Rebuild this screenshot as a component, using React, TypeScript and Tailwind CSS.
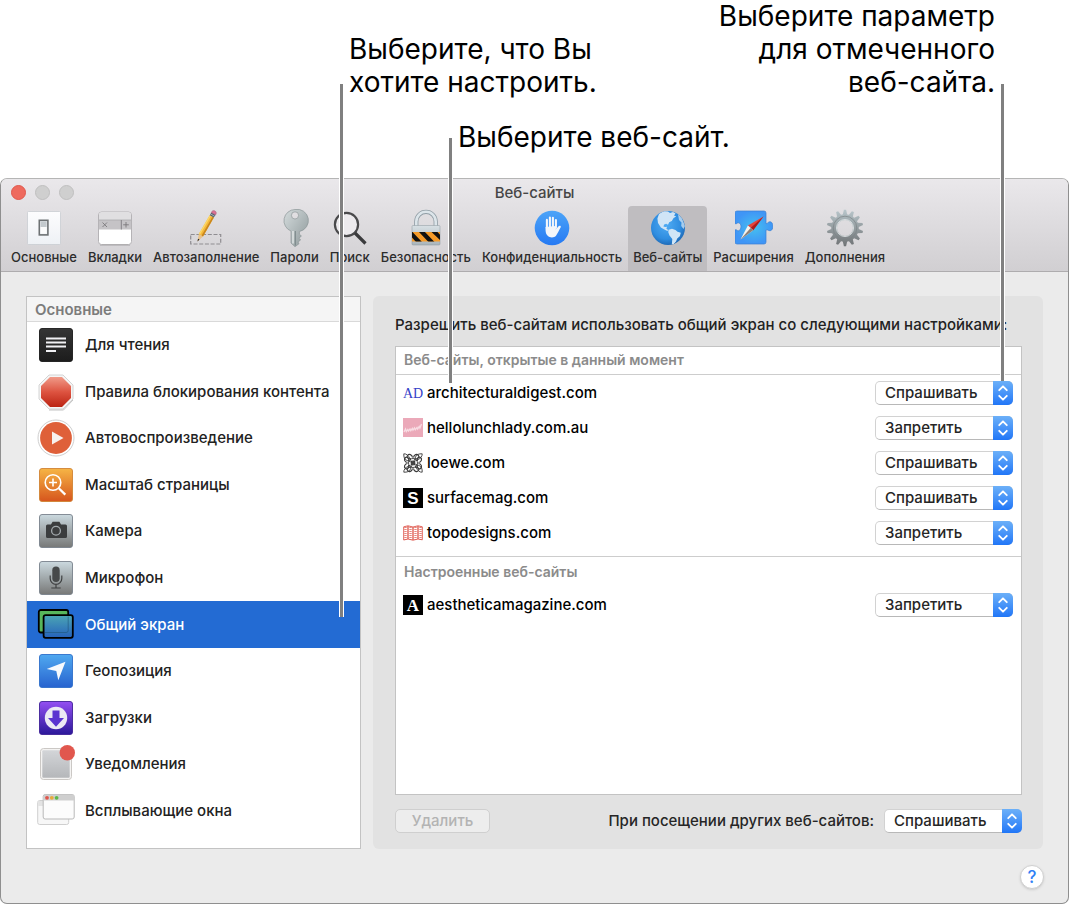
import type { ReactNode } from "react";

const permissions = ["Спрашивать", "Запретить", "Разрешить"];

// Toolbar icons, all drawn on a 38x38 grid
const GeneralIcon = () => (
    <svg viewBox="0 0 38 38" className="size-[38px]" aria-hidden="true">
        <defs>
            <linearGradient id="tbGeneral" x1="0" y1="0" x2="0" y2="1">
                <stop offset="0" stopColor="#fdfdfe" />
                <stop offset="1" stopColor="#eef1f5" />
            </linearGradient>
        </defs>
        <rect x="2.5" y="2.5" width="33" height="33" rx="1" fill="url(#tbGeneral)" stroke="#c9cdd2" strokeWidth="0.8" />
        <rect x="14.3" y="11.3" width="8.6" height="14.6" fill="#eceff1" stroke="#6d7173" strokeWidth="1.6" />
        <rect x="15.6" y="12.4" width="6" height="5.6" fill="#c3c9cd" />
        <rect x="15.6" y="18" width="6" height="6.6" fill="#fbfbfb" />
    </svg>
);

const TabsIcon = () => (
    <svg viewBox="0 0 38 38" className="size-[38px]" aria-hidden="true">
        <rect x="2.5" y="3" width="33" height="32.5" rx="3" fill="#fff" stroke="#b5b3b6" strokeWidth="1" />
        <path d="M3 11V6a3 3 0 0 1 3-3h26a3 3 0 0 1 3 3v5z" fill="#e0dfe1" />
        <rect x="3" y="11" width="32" height="9.5" fill="#c5c3c6" />
        <path d="M3 11h32" stroke="#aaa8ab" strokeWidth="0.8" />
        <path d="M25.3 11v9.5" stroke="#858387" strokeWidth="1" />
        <path d="M6.5 13.5l4.5 4.5M11 13.5l-4.5 4.5M30 13v5.5M27.2 15.8h5.6" stroke="#7a787c" strokeWidth="0.9" />
        <path d="M4 36.2h30" stroke="#a3a1a5" strokeWidth="0.7" />
    </svg>
);

const AutofillIcon = () => (
    <svg viewBox="0 0 38 38" className="size-[38px]" aria-hidden="true">
        <rect x="3.7" y="25.5" width="30" height="9.5" fill="none" stroke="#8f8d91" strokeWidth="1.2" strokeDasharray="4 1.7" />
        <path d="M10.5 32.5l1.3-7.5 4.2 2.4z" fill="#e8c28c" />
        <path d="M10.5 32.5l.5-2.8 1.5.9z" fill="#222" />
        <path d="M11.8 25L22.7 6.2l4.2 2.4L16 27.4z" fill="#f5b83a" />
        <path d="M14.6 26.6L25.5 7.8l1.4.8L16 27.4z" fill="#c9861e" />
        <path d="M11.8 25L22.7 6.2l1.2.7L13 25.7z" fill="#fbd768" />
        <path d="M22.7 6.2l1.7-2.8 4.2 2.4-1.7 2.8z" fill="#56636e" />
        <path d="M23.5 4.9l4.2 2.4" stroke="#a9b6be" strokeWidth="0.9" />
        <path d="M24.4 3.4C25.5 0 31 2 28.6 5.8z" fill="#dc7294" stroke="#a8587a" strokeWidth="0.6" />
    </svg>
);

const KeyIcon = () => (
    <svg viewBox="0 0 38 38" className="size-[38px]" aria-hidden="true">
        <defs>
            <linearGradient id="tbKey" x1="0" y1="0" x2="1" y2="1">
                <stop offset="0" stopColor="#d5dcdd" />
                <stop offset="1" stopColor="#8c9799" />
            </linearGradient>
        </defs>
        <path
            d="M19 .5a11.2 11.2 0 0 0-4 21.6V34l4 3.7 4-3-1-1.7 2.6-2-1.6-1.8 2.4-2.2-2-1.8V22.5A11.2 11.2 0 0 0 19 .5zm0 2.3a3.6 3.6 0 1 1 0 7.2 3.6 3.6 0 0 1 0-7.2z"
            fill="url(#tbKey)"
            fillRule="evenodd"
            stroke="#8c9698"
            strokeWidth="0.7"
        />
        <path d="M19.3 22v14.5" stroke="#798587" strokeWidth="1" />
        <path d="M17 22v12.5" stroke="#eef2f2" strokeWidth="1.2" />
    </svg>
);

const SearchIcon = () => (
    <svg viewBox="0 0 38 38" className="size-[38px]" aria-hidden="true">
        <circle cx="15.5" cy="15.5" r="11.6" fill="#eceaed" stroke="#4a4a4c" strokeWidth="2.2" />
        <path d="M24 24l10.5 10.5" stroke="#3b3b3d" strokeWidth="3.2" />
    </svg>
);

const LockIcon = () => (
    <svg viewBox="0 0 38 38" className="size-[38px]" aria-hidden="true">
        <defs>
            <linearGradient id="tbLock" x1="0" y1="0" x2="0" y2="1">
                <stop offset="0" stopColor="#d8e0e4" />
                <stop offset="1" stopColor="#a9b4bb" />
            </linearGradient>
            <clipPath id="tbLockStripes">
                <rect x="5" y="23" width="28" height="9.5" />
            </clipPath>
        </defs>
        <path d="M9.3 18v-5.5a9.7 9.7 0 0 1 19.4 0V18" fill="none" stroke="#8f9ca4" strokeWidth="4.2" />
        <path d="M9.3 18v-5.5a9.7 9.7 0 0 1 19.4 0V18" fill="none" stroke="#dce5ea" strokeWidth="2.6" />
        <rect x="5" y="16.5" width="28" height="19.5" rx="1" fill="url(#tbLock)" stroke="#8b969d" strokeWidth="0.5" />
        <rect x="5" y="23" width="28" height="9.5" fill="#f59a28" />
        <path d="M5 22.5l10 10.5H9l-4-4.5zM11.5 22.5h6L27.5 33h-6zM24 22.5h6l5 5.5v5z" fill="#111" clipPath="url(#tbLockStripes)" />
    </svg>
);

const PrivacyIcon = () => (
    <svg viewBox="0 0 38 38" className="size-[38px]" aria-hidden="true">
        <defs>
            <linearGradient id="tbPrivacy" x1="0" y1="0" x2="0" y2="1">
                <stop offset="0" stopColor="#4ca4f8" />
                <stop offset="1" stopColor="#2579f3" />
            </linearGradient>
        </defs>
        <circle cx="19" cy="19" r="17.3" fill="url(#tbPrivacy)" />
        <path d="M12.5 18c0 5 .3 6.8 2.2 8.8 2 2.2 6.6 2.1 8.3 0 1.3-1.6 3.2-5.8 4.6-8.2 1-1.7-1.2-2.4-2.3-1.1l-2.5 3V17z" fill="#f3f6fa" />
        <path d="M13.9 19v-8.1M16.9 18V8.5M19.9 18V8.8M22.9 19v-8" stroke="#f3f6fa" strokeWidth="2.1" strokeLinecap="round" />
    </svg>
);

const GlobeIcon = () => (
    <svg viewBox="0 0 38 38" className="size-[38px]" aria-hidden="true">
        <defs>
            <radialGradient id="tbGlobe" cx="0.45" cy="0.4" r="0.65">
                <stop offset="0" stopColor="#4fabf3" />
                <stop offset="0.65" stopColor="#2f8de0" />
                <stop offset="1" stopColor="#1b62ad" />
            </radialGradient>
            <clipPath id="tbGlobeClip">
                <circle cx="19" cy="19" r="17" />
            </clipPath>
        </defs>
        <circle cx="19" cy="19" r="17" fill="url(#tbGlobe)" />
        <g clipPath="url(#tbGlobeClip)" fill="#d0e5f6">
            <path d="M10 5l5-3 4 .5 2 1.5 3-1 2.5 1.5-1.5 2 2.2 1-2.6 1.6-1.8 2.9-2.6 1.3-1.2 2.5-1.8-1-2 .6-.8 2.2 1.8.5 1.8-.3-.6 2 1.8 1.3-.8.9-3-1.6-3.5-2L9 14 8.4 9.5z" />
            <path d="M19.5 20.7l3.5-1 3.5 1.2 2 1.8 3.3 1-1 3.6-2.6 2.3-1.2 3-2.9 3.2-1.3-.5.5-5.2-2.8-3.7-1.2-3.2z" />
            <path d="M29 5l4 4.5 3 7.5-1.5 3-2.3-3 .3-3.500-2.500-2.500z" opacity="0.75" />
        </g>
    </svg>
);

const ExtensionsIcon = () => (
    <svg viewBox="0 0 38 38" className="size-[38px]" aria-hidden="true">
        <defs>
            <radialGradient id="tbExt">
                <stop offset="0" stopColor="#45c0ef" />
                <stop offset="1" stopColor="#3f95f6" />
            </radialGradient>
        </defs>
        <path
            d="M2 2h27a2 2 0 0 1 2 2v10.5c1.5.8 2-2 4.2-1.8 3.6.5 3.6 8.6 0 9-2.2.1-2.7-1.6-4.2-.7V33a2 2 0 0 1-2 2H2a2 2 0 0 1-2-2V21c1.5-1.2 2 1 3.5.8 3.3-.8 3.3-7.6 0-8-1.5-.2-2 1.8-3.5.7V4a2 2 0 0 1 2-2z"
            fill="url(#tbExt)"
            stroke="#3980d2"
            strokeWidth="0.7"
        />
        <path d="M28.5 7.5l-15.6 9 5.3 4.7z" fill="#e5443c" />
        <path d="M28.5 7.5L15.6 18.9l2.6 2.3z" fill="#a91d1d" />
        <path d="M5.5 30.5l7.4-14 5.3 4.7z" fill="#f6f3ee" />
        <path d="M5.5 30.5l10.1-11.6 2.6 2.3z" fill="#8d8178" />
    </svg>
);

const teeth = Array.from({ length: 14 }, (_, i) => (i * 360) / 14);

const GearIcon = () => (
    <svg viewBox="0 0 38 38" className="size-[38px]" aria-hidden="true">
        <defs>
            <linearGradient id="tbGear" gradientUnits="userSpaceOnUse" x1="0" y1="0" x2="0" y2="38">
                <stop offset="0" stopColor="#bac8cd" />
                <stop offset="1" stopColor="#6e7173" />
            </linearGradient>
            <mask id="tbGearMask">
                <rect width="38" height="38" fill="#000" />
                <circle cx="19" cy="19" r="13.8" fill="#fff" />
                {teeth.map((angle) => (
                    <path key={angle} d="M16.7 6L17.9.8h2.2L21.3 6z" fill="#fff" transform={`rotate(${angle} 19 19)`} />
                ))}
                <circle cx="19" cy="19" r="8" fill="#000" />
            </mask>
        </defs>
        <rect width="38" height="38" fill="url(#tbGear)" mask="url(#tbGearMask)" />
        <circle cx="19" cy="19" r="11.8" fill="none" stroke="#7b8285" strokeWidth="0.7" />
        <circle cx="19" cy="19" r="8.5" fill="none" stroke="#dfe5e7" strokeWidth="0.9" />
    </svg>
);

// Sidebar icons, drawn on a 38x38 grid with a 34px tile inside
const Tile = ({ id, from, to, edge, children }: { id: string; from: string; to: string; edge: string; children: ReactNode }) => (
    <svg viewBox="0 0 38 38" className="size-[38px]" aria-hidden="true">
        <defs>
            <linearGradient id={id} x1="0" y1="0" x2="0" y2="1">
                <stop offset="0" stopColor={from} />
                <stop offset="1" stopColor={to} />
            </linearGradient>
        </defs>
        <rect x="2.5" y="2.5" width="33" height="33" rx="2.5" fill={`url(#${id})`} stroke={edge} strokeWidth="0.9" />
        {children}
    </svg>
);

const ReaderIcon = () => (
    <Tile id="sbReader" from="#353535" to="#1c1c1c" edge="#1a1a1a">
        <path d="M9 12.5h20M9 16.5h20M9 20.5h20M9 25h10" stroke="#f1f1f4" strokeWidth="1.8" />
    </Tile>
);

const BlockerIcon = () => (
    <svg viewBox="0 0 38 38" className="size-[38px]" aria-hidden="true">
        <defs>
            <linearGradient id="sbStop" x1="0" y1="0" x2="0" y2="1">
                <stop offset="0" stopColor="#f09a88" />
                <stop offset="0.5" stopColor="#dd5340" />
                <stop offset="1" stopColor="#bb2413" />
            </linearGradient>
        </defs>
        <path d="M12 2h14l10 10v14L26 36H12L2 26V12z" fill="#f5f5f5" stroke="#d4d4d4" strokeWidth="1" />
        <path d="M12 37h14.5L36 27" fill="none" stroke="#b5b5b5" strokeWidth="0.8" />
        <path d="M13 4h12l9 9v12l-9 9H13l-9-9V13z" fill="url(#sbStop)" />
    </svg>
);

const AutoplayIcon = () => (
    <svg viewBox="0 0 38 38" className="size-[38px]" aria-hidden="true">
        <circle cx="19" cy="19" r="18" fill="#fff" stroke="#cfcfcf" strokeWidth="1" />
        <circle cx="19" cy="19" r="15.9" fill="#df6039" />
        <path d="M15 12.5L26.5 19 15 25.5z" fill="#f7f1ee" />
    </svg>
);

const ZoomIcon = () => (
    <Tile id="sbZoom" from="#f6b545" to="#d6551d" edge="#d08334">
        <circle cx="16" cy="16.5" r="7.8" fill="none" stroke="#fff" strokeWidth="1.6" />
        <path d="M16 12.5v8M12 16.5h8" stroke="#fff" strokeWidth="1.6" />
        <path d="M21.8 22.3l6.5 6.3" stroke="#fff" strokeWidth="2.2" />
    </Tile>
);

const CameraIcon = () => (
    <Tile id="sbCamera" from="#cbd9df" to="#777877" edge="#78818b">
        <path d="M10.5 12.5H14l1.6-2.8h6.8l1.6 2.8h4.5A1.5 1.5 0 0 1 30 14v10.5a1.5 1.5 0 0 1-1.5 1.5h-18A1.5 1.5 0 0 1 9 24.5V14a1.5 1.5 0 0 1 1.5-1.5z" fill="#3b3d3e" />
        <circle cx="19" cy="18.8" r="4.4" fill="#3b3d3e" stroke="#a4abae" strokeWidth="1.3" />
    </Tile>
);

const MicIcon = () => (
    <Tile id="sbMic" from="#cbd9df" to="#777877" edge="#78818b">
        <rect x="15.3" y="7.5" width="7.4" height="15.5" rx="3.7" fill="#46494a" />
        <path d="M13.2 16.5v3a5.8 5.8 0 0 0 11.6 0v-3M19 25.3V29M14.3 29h9.4" fill="none" stroke="#3f4142" strokeWidth="1.2" />
    </Tile>
);

const ScreenIcon = () => (
    <svg viewBox="0 0 38 38" className="size-[38px]" aria-hidden="true">
        <defs>
            <linearGradient id="sbScreen" x1="0" y1="0" x2="0" y2="1">
                <stop offset="0" stopColor="#4ba5b4" />
                <stop offset="1" stopColor="#2662bc" />
            </linearGradient>
        </defs>
        <rect x="1.8" y="4" width="29.4" height="22.5" rx="2" fill="#58b65b" stroke="#000" strokeWidth="1.8" />
        <rect x="6.6" y="9.2" width="29.2" height="22.6" rx="2" fill="url(#sbScreen)" stroke="#000" strokeWidth="1.8" />
        <path d="M31.2 10.5v14a2 2 0 0 1-2 2H8" fill="none" stroke="#1f557a" strokeWidth="1" opacity="0.6" />
    </svg>
);

const LocationIcon = () => (
    <Tile id="sbLocation" from="#50a9f0" to="#2763cf" edge="#2f6fc9">
        <path d="M28.5 9.7l-7.2 18.5-2-9.2-9.6-2z" fill="#f7fafd" />
    </Tile>
);

const DownloadsIcon = () => (
    <Tile id="sbDownloads" from="#944ff3" to="#2b1899" edge="#402197">
        <circle cx="19" cy="19" r="11.2" fill="#ece9f4" />
        <path d="M15.5 11.5h7V19H27l-8 8.8-8-8.8h4.5z" fill="#5b34d0" />
    </Tile>
);

const NotificationsIcon = () => (
    <svg viewBox="0 0 38 38" className="size-[38px]" aria-hidden="true">
        <defs>
            <linearGradient id="sbNotify" x1="0" y1="0" x2="0" y2="1">
                <stop offset="0" stopColor="#d3d5d8" />
                <stop offset="1" stopColor="#b5b7ba" />
            </linearGradient>
        </defs>
        <rect x="3.5" y="3.5" width="31" height="31" rx="3" fill="#f4f3f2" stroke="#cbc8c5" strokeWidth="1" />
        <rect x="5.3" y="5.3" width="27.4" height="27.4" rx="1" fill="url(#sbNotify)" />
        <circle cx="30.3" cy="7.8" r="7.7" fill="#e1574e" />
    </svg>
);

const PopupsIcon = () => (
    <svg viewBox="0 0 38 38" className="size-[38px]" aria-hidden="true">
        <rect x="0.7" y="8.5" width="31" height="24" rx="2" fill="#f7f7f7" stroke="#cfcfcf" strokeWidth="1" />
        <rect x="1.2" y="9" width="30" height="5" fill="#e3e3e3" />
        <rect x="6.2" y="2.5" width="31" height="24.5" rx="2" fill="#fcfcfc" stroke="#b9b9b9" strokeWidth="1" />
        <path d="M6.2 8.5v-4a2 2 0 0 1 2-2h27a2 2 0 0 1 2 2v4z" fill="#cfcfcf" />
        <circle cx="10" cy="5.8" r="1.9" fill="#e0564c" />
        <circle cx="14.8" cy="5.8" r="1.9" fill="#e9ab3c" />
        <circle cx="19.6" cy="5.8" r="1.9" fill="#5cb84b" />
    </svg>
);

// Favicons
const AdFavicon = () => (
    <svg viewBox="0 0 20 20" className="size-5" aria-hidden="true">
        <text x="10" y="15" textAnchor="middle" fontSize="14" fill="#3541c8" fontFamily="Liberation Serif, serif">AD</text>
    </svg>
);

const LunchLadyFavicon = () => (
    <svg viewBox="0 0 20 20" className="size-5" aria-hidden="true">
        <rect width="20" height="19" fill="#eba9b9" />
        <path d="M1 14l1.5-3 .8 2.5 1.5-2 .7 1.5 1.5-2 .8 1.6 1.5-2.2.7 1.8 1.5-2.3.8 1.8L14 9.5l.7 1.5 1.5-2.5.7 1.5 1.6-4" fill="none" stroke="#f8dce3" strokeWidth="1.3" />
    </svg>
);

const LoeweFavicon = () => (
    <svg viewBox="0 0 20 20" className="size-5" aria-hidden="true" fill="none" stroke="#3a3a3a" strokeWidth="1.2">
        {[0, 90, 180, 270].map((angle) => (
            <g key={angle} transform={`rotate(${angle} 10 10)`}>
                <path d="M9.5 4.5C9 1.5 6 .5 4.5 2.5S6 6.5 8 5.5" />
                <path d="M4.500 9.500C1.500 9 .5 6 2.500 4.500S6.500 6 5.500 8" />
                <path d="M.8.8c2.500-.3 5 2 6.200 5s2 3.200 3 4.200M10 10C9 9 6.500 8.500 4 7.500S.6 4 .8.8" strokeWidth="0.9" />
            </g>
        ))}
        <circle cx="10" cy="10" r="4.5" strokeWidth="0.9" />
        <circle cx="10" cy="10" r="1.8" />
    </svg>
);

const LetterFavicon = ({ letter, font }: { letter: string; font: string }) => (
    <svg viewBox="0 0 20 20" className="size-5" aria-hidden="true">
        <rect width="20" height="20" fill="#000" />
        <text x="10" y="16" textAnchor="middle" fontSize="17" fontWeight="700" fill="#fff" fontFamily={font}>{letter}</text>
    </svg>
);

const TopoFavicon = () => (
    <svg viewBox="0 0 20 20" className="size-5" aria-hidden="true" fill="none" stroke="#de5449" strokeWidth="0.9">
        <path d="M.7 3.8L5 2.8 10 4l5-1.2 4.3 1v13L15 16l-5 1.2L5 16l-4.300 1z" />
        <path d="M5 3v13M10 4v13M15 3v13" strokeWidth="1.3" />
        <path d="M2.500 4v12.500M7.500 4v12.500M12.500 4v12.500M17.500 4v12.500" strokeWidth="2.4" strokeDasharray="1 1" opacity="0.7" />
    </svg>
);

const tools = [
    { name: "Основные", icon: GeneralIcon },
    { name: "Вкладки", icon: TabsIcon },
    { name: "Автозаполнение", icon: AutofillIcon },
    { name: "Пароли", icon: KeyIcon },
    { name: "Поиск", icon: SearchIcon },
    { name: "Безопасность", icon: LockIcon },
    { name: "Конфиденциальность", icon: PrivacyIcon },
    { name: "Веб-сайты", icon: GlobeIcon, active: true },
    { name: "Расширения", icon: ExtensionsIcon },
    { name: "Дополнения", icon: GearIcon },
];

const settings = [
    { name: "Для чтения", icon: ReaderIcon },
    { name: "Правила блокирования контента", icon: BlockerIcon },
    { name: "Автовоспроизведение", icon: AutoplayIcon },
    { name: "Масштаб страницы", icon: ZoomIcon },
    { name: "Камера", icon: CameraIcon },
    { name: "Микрофон", icon: MicIcon },
    { name: "Общий экран", icon: ScreenIcon, active: true },
    { name: "Геопозиция", icon: LocationIcon },
    { name: "Загрузки", icon: DownloadsIcon },
    { name: "Уведомления", icon: NotificationsIcon },
    { name: "Всплывающие окна", icon: PopupsIcon },
];

const openSites = [
    { host: "architecturaldigest.com", value: "Спрашивать", icon: <AdFavicon /> },
    { host: "hellolunchlady.com.au", value: "Запретить", icon: <LunchLadyFavicon /> },
    { host: "loewe.com", value: "Спрашивать", icon: <LoeweFavicon /> },
    { host: "surfacemag.com", value: "Спрашивать", icon: <LetterFavicon letter="S" font="Liberation Sans, sans-serif" /> },
    { host: "topodesigns.com", value: "Запретить", icon: <TopoFavicon /> },
];

const savedSites = [
    { host: "aestheticamagazine.com", value: "Запретить", icon: <LetterFavicon letter="A" font="Liberation Serif, serif" /> },
];

function PopupSelect({ id, value }: { id: string; value: string }) {
    return (
        <div className="relative w-[138px]">
            <select
                id={id}
                defaultValue={value}
                className="block h-6 w-full appearance-none rounded-[5px] border border-[#d2d2d2] border-b-[#b8b8b8] bg-white pl-[9px] pr-5 text-[15px] leading-5 font-medium text-[#262626]"
            >
                {permissions.map((option) => (
                    <option key={option}>{option}</option>
                ))}
            </select>
            <span className="pointer-events-none absolute inset-y-0 right-0 flex w-5 items-center justify-center rounded-r-[5px] bg-gradient-to-b from-[#6cb0f8] to-[#2076f7]">
                <svg viewBox="0 0 20 24" className="h-6 w-5" fill="none" stroke="#fff" strokeWidth="1.8" strokeLinecap="round" strokeLinejoin="round" aria-hidden="true">
                    <path d="M6.2 9.2L10 5.300l3.800 3.900M6.200 14.800l3.800 3.900 3.800-3.900" />
                </svg>
            </span>
        </div>
    );
}

function SiteRow({ host, value, icon }: { host: string; value: string; icon: ReactNode }) {
    return (
        <tr className="h-[35px]">
            <td className="pl-[7px] align-middle">
                <label htmlFor={host} className="flex items-center gap-1 text-[15px] leading-5 font-medium text-black">
                    {icon}
                    {host}
                </label>
            </td>
            <td className="w-[146px] pr-2 align-middle">
                <PopupSelect id={host} value={value} />
            </td>
        </tr>
    );
}

export default function App() {
    return (
        <div className="relative flex min-h-screen flex-col bg-white font-['Inter','Liberation_Sans',sans-serif]">
            {/* Callouts */}
            <header className="flex h-[178px] justify-between pl-[349px] pr-[74px] text-[28px] leading-[33px] whitespace-nowrap text-black">
                <div className="w-0 pt-[33px]">
                    <p>
                        Выберите, что Вы
                        <br />
                        хотите настроить.
                    </p>
                    <p className="mt-[22px] pl-[109px]">Выберите веб-сайт.</p>
                </div>
                <p className="text-right">
                    Выберите параметр
                    <br />
                    для отмеченного
                    <br />
                    веб-сайта.
                </p>
            </header>

            {/* Callout lines, drawn over the window */}
            <div className="pointer-events-none absolute left-[339px] top-[84px] z-10 h-[533px] w-[5px] border-x border-white bg-[#808080]" />
            <div className="pointer-events-none absolute left-[448px] top-[138px] z-10 h-[245px] w-[5px] border-x border-white bg-[#808080]" />
            <div className="pointer-events-none absolute right-[64px] top-[84px] z-10 h-[297px] w-[5px] border-x border-white bg-[#808080]" />

            {/* Window */}
            <div className="flex flex-1 flex-col overflow-hidden rounded-[7px] border border-[#8f8f8f] border-t-[#b5b5b5] bg-[#ebebeb]">
                <div className="border-b border-[#aeacae] bg-gradient-to-b from-[#eae8eb] to-[#d1cfd2]">
                    <div className="grid h-[27px] grid-cols-[1fr_auto_1fr] items-center px-[10px]">
                        <div className="flex gap-[9px]">
                            <button aria-label="Закрыть" className="size-[15px] rounded-full border border-[#e0574b] bg-[#ee6a5e]" />
                            <button aria-label="Свернуть" className="size-[15px] rounded-full border border-[#bfbfbf] bg-[#cfcfcf]" />
                            <button aria-label="Развернуть" className="size-[15px] rounded-full border border-[#bfbfbf] bg-[#cfcfcf]" />
                        </div>
                        <h1 className="text-[15px] leading-5 font-medium text-[#464646]">Веб-сайты</h1>
                    </div>
                    <nav className="flex h-[65px] gap-px pl-[5px]">
                        {tools.map((tool) => (
                            <button
                                key={tool.name}
                                className={`flex flex-col items-center rounded-t px-[5px] pt-[3px] text-[13px] leading-4 font-medium text-[#2c2c2c] ${tool.active ? "bg-[#bfbdc0]" : ""}`}
                            >
                                <tool.icon />
                                <span className="mt-[2px] whitespace-nowrap">{tool.name}</span>
                            </button>
                        ))}
                    </nav>
                </div>

                <main className="flex flex-1 gap-3 px-[25px] pt-6">
                    {/* Settings list */}
                    <aside className="flex w-[335px] shrink-0 flex-col border border-[#c3c3c3] bg-white">
                        <h2 className="border-b border-[#d9d9d9] bg-[#f5f5f5] px-2 pt-1 pb-[2px] text-[15px] leading-[18px] font-semibold text-[#7c7c7c]">Основные</h2>
                        <ul className="flex flex-1 flex-col pb-[14px]">
                            {settings.map((item) => (
                                <li key={item.name} className="flex min-h-10 flex-1">
                                    <button
                                        className={`flex w-full items-center gap-[10px] pl-[10px] text-left text-[15px] leading-5 font-medium ${item.active ? "bg-[#236bd3] text-white" : "text-[#222]"}`}
                                    >
                                        <item.icon />
                                        <span className="whitespace-nowrap">{item.name}</span>
                                    </button>
                                </li>
                            ))}
                        </ul>
                    </aside>

                    {/* Site permissions */}
                    <section className="flex min-w-0 flex-1 flex-col rounded-md bg-[#e2e2e2] pr-[21px] pb-4 pl-[22px] pt-[19px]">
                        <p className="whitespace-nowrap text-[15px] leading-5 font-medium text-[#222]">
                            Разрешить веб-сайтам использовать общий экран со следующими настройками:
                        </p>
                        <div className="mt-[11px] flex-1 border border-[#c3c3c3] bg-white">
                            <table className="w-full border-collapse">
                                <tbody>
                                    <tr className="h-[27px] border-b border-[#cdcdcd]">
                                        <th colSpan={2} className="pl-2 text-left text-sm leading-4 font-semibold text-[#8b8b8b]">
                                            Веб-сайты, открытые в данный момент
                                        </th>
                                    </tr>
                                    <tr className="h-px"><td colSpan={2} /></tr>
                                    {openSites.map((site) => (
                                        <SiteRow key={site.host} {...site} />
                                    ))}
                                    <tr className="h-[6px]"><td colSpan={2} /></tr>
                                </tbody>
                                <tbody className="border-t border-[#cdcdcd]">
                                    <tr className="h-[31px]">
                                        <th colSpan={2} className="pl-2 text-left text-sm leading-4 font-semibold text-[#8b8b8b]">
                                            Настроенные веб-сайты
                                        </th>
                                    </tr>
                                    {savedSites.map((site) => (
                                        <SiteRow key={site.host} {...site} />
                                    ))}
                                </tbody>
                            </table>
                        </div>
                        <div className="mt-[14px] flex items-center justify-between">
                            <button disabled className="h-6 w-[95px] rounded-[5px] border border-[#cfcfcf] bg-[#ededed] text-[15px] leading-5 font-medium text-[#b3b3b3]">
                                Удалить
                            </button>
                            <div className="flex items-center gap-[10px]">
                                <label htmlFor="other-sites" className="text-[15px] leading-5 font-medium text-[#262626]">
                                    При посещении других веб-сайтов:
                                </label>
                                <PopupSelect id="other-sites" value="Спрашивать" />
                            </div>
                        </div>
                    </section>
                </main>

                <footer className="flex justify-end px-6 pb-[14px] pt-4">
                    <button aria-label="Справка" className="size-6 rounded-full border border-[#d0d0d0] bg-white text-[17px] leading-5 font-medium text-[#2f7ff5] shadow-sm">?</button>
                </footer>
            </div>
        </div>
    );
}
